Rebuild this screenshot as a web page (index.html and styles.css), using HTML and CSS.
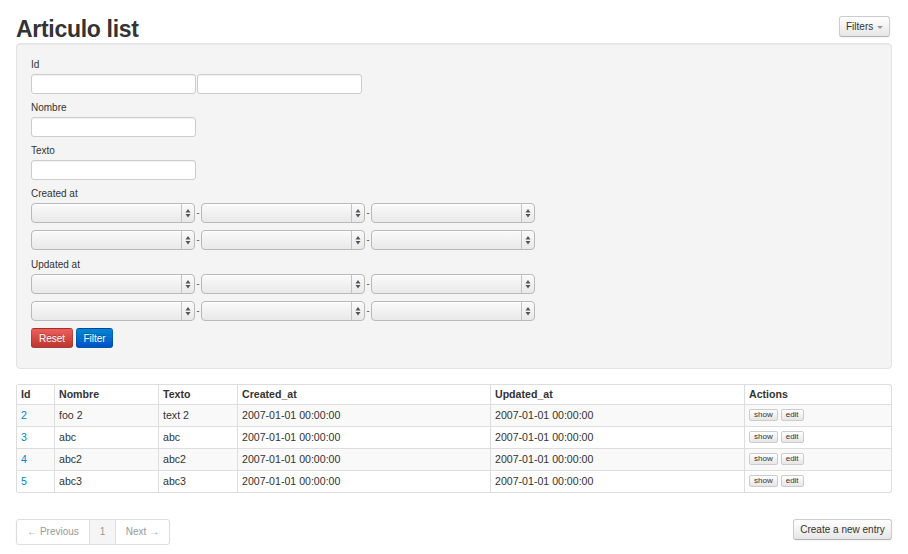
FILE: index.html
```html
<!DOCTYPE html>
<html lang="es">
<head>
  <meta charset="UTF-8" />
  <title>Articulo list</title>
  <link rel="stylesheet" href="styles.css">
</head>
<body>
  <div class="page">
    <div class="page-header">
      <h1>Articulo list</h1>
      <button class="btn btn-filters">Filters <span class="caret"></span></button>
    </div>

    <form class="well">
      <label>Id</label>
      <div class="row">
        <input type="text" class="field">
        <input type="text" class="field">
      </div>

      <label>Nombre</label>
      <div class="row"><input type="text" class="field"></div>

      <label>Texto</label>
      <div class="row"><input type="text" class="field"></div>

      <label>Created at</label>
      <div class="row date-row">
        <span class="select"></span><span class="dash">-</span><span class="select"></span><span class="dash">-</span><span class="select"></span>
      </div>
      <div class="row date-row">
        <span class="select"></span><span class="dash">-</span><span class="select"></span><span class="dash">-</span><span class="select"></span>
      </div>

      <label>Updated at</label>
      <div class="row date-row">
        <span class="select"></span><span class="dash">-</span><span class="select"></span><span class="dash">-</span><span class="select"></span>
      </div>
      <div class="row date-row">
        <span class="select"></span><span class="dash">-</span><span class="select"></span><span class="dash">-</span><span class="select"></span>
      </div>

      <div class="actions">
        <button type="button" class="btn-color btn-danger">Reset</button>
        <button type="button" class="btn-color btn-primary">Filter</button>
      </div>
    </form>

    <table class="list">
      <colgroup>
        <col style="width:38px">
        <col style="width:104px">
        <col style="width:79px">
        <col style="width:253px">
        <col style="width:254px">
        <col>
      </colgroup>
      <thead>
        <tr><th>Id</th><th>Nombre</th><th>Texto</th><th>Created_at</th><th>Updated_at</th><th>Actions</th></tr>
      </thead>
      <tbody>
        <tr>
          <td><a href="#">2</a></td><td>foo 2</td><td>text 2</td>
          <td>2007-01-01 00:00:00</td><td>2007-01-01 00:00:00</td>
          <td><span class="mini">show</span><span class="mini">edit</span></td>
        </tr>
        <tr>
          <td><a href="#">3</a></td><td>abc</td><td>abc</td>
          <td>2007-01-01 00:00:00</td><td>2007-01-01 00:00:00</td>
          <td><span class="mini">show</span><span class="mini">edit</span></td>
        </tr>
        <tr>
          <td><a href="#">4</a></td><td>abc2</td><td>abc2</td>
          <td>2007-01-01 00:00:00</td><td>2007-01-01 00:00:00</td>
          <td><span class="mini">show</span><span class="mini">edit</span></td>
        </tr>
        <tr>
          <td><a href="#">5</a></td><td>abc3</td><td>abc3</td>
          <td>2007-01-01 00:00:00</td><td>2007-01-01 00:00:00</td>
          <td><span class="mini">show</span><span class="mini">edit</span></td>
        </tr>
      </tbody>
    </table>

    <div class="footer">
      <ul class="pager">
        <li class="prev">&larr; Previous</li>
        <li class="current">1</li>
        <li class="next">Next &rarr;</li>
      </ul>
      <button class="btn btn-new">Create a new entry</button>
    </div>
  </div>
</body>
</html>
```

FILE: styles.css
```css
body {
  margin: 0;
  font-family: "Liberation Sans", Arial, sans-serif;
  font-size: 10px;
  color: #333;
  background: #fff;
}

.page {
  padding: 16px 16px 0;
}

.page-header {
  display: flex;
  justify-content: space-between;
  align-items: flex-start;
  height: 27px;
}

h1 {
  margin: 0;
  font-size: 23px;
  line-height: 27px;
  font-weight: bold;
  color: #333;
  letter-spacing: -0.3px;
}

.btn {
  font-family: inherit;
  font-size: 10px;
  color: #333;
  background: linear-gradient(#fff, #e6e6e6);
  border: 1px solid #ccc;
  border-bottom-color: #b3b3b3;
  border-radius: 3px;
  box-shadow: inset 0 1px 0 rgba(255,255,255,.2), 0 1px 2px rgba(0,0,0,.05);
  padding: 0 8px;
  height: 21px;
}

.btn-filters {
  width: 51px;
  margin-right: 2px;
  padding: 0 4px;
}

.caret {
  display: inline-block;
  width: 0;
  height: 0;
  border-left: 3px solid transparent;
  border-right: 3px solid transparent;
  border-top: 3px solid #999;
  vertical-align: middle;
  margin-left: 1px;
}

.well {
  background: #f4f4f4;
  border: 1px solid #e3e3e3;
  border-radius: 4px;
  box-shadow: inset 0 1px 1px rgba(0,0,0,.05);
  padding: 13px 14px 19px;
  height: 292px;
}

.well label {
  display: block;
  line-height: 16px;
  margin-bottom: 1px;
}

.row {
  display: flex;
  align-items: center;
  margin-bottom: 6px;
}

.field {
  box-sizing: border-box;
  width: 165px;
  height: 20px;
  margin: 0 1px 0 0;
  background: #fff;
  border: 1px solid #ccc;
  border-radius: 3px;
  box-shadow: inset 0 1px 1px rgba(0,0,0,.06);
}

.date-row {
  margin-bottom: 7px;
}

.select {
  position: relative;
  box-sizing: border-box;
  width: 164px;
  height: 20px;
  border: 1px solid #b9b9b9;
  border-radius: 4px;
  background: linear-gradient(#fafafa, #e9e9e9);
  box-shadow: inset 0 1px 0 #fff;
}

/* arrow box on the right of each select */
.select::after {
  content: "";
  position: absolute;
  top: 0;
  right: 0;
  bottom: 0;
  width: 12px;
  border-left: 1px solid #c4c4c4;
  background: url("data:image/svg+xml;utf8,<svg xmlns='http://www.w3.org/2000/svg' width='12' height='18'><path d='M6 5 L3.5 8.5 L8.5 8.5 Z M6 13.5 L3.5 10 L8.5 10 Z' fill='%23555'/></svg>") center no-repeat;
}

.dash {
  width: 6px;
  text-align: center;
  font-size: 9px;
  line-height: 20px;
  color: #333;
}

.actions {
  display: flex;
  gap: 3px;
}

.btn-color {
  font-family: inherit;
  font-size: 10px;
  color: #fff;
  text-shadow: 0 -1px 0 rgba(0,0,0,.25);
  height: 20px;
  border-radius: 3px;
  padding: 0 4px;
  border: 1px solid rgba(0,0,0,.15);
  border-bottom-color: rgba(0,0,0,.3);
}

.btn-danger {
  width: 42px;
  background: linear-gradient(#ee5f5b, #bd362f);
}

.btn-primary {
  width: 37px;
  background: linear-gradient(#0088cc, #0050cc);
}

.list {
  width: 100%;
  margin-top: 15px;
  border-collapse: separate;
  border-spacing: 0;
  table-layout: fixed;
  border: 1px solid #ddd;
  border-left: 0;
  border-radius: 3px;
  font-size: 10.6px;
}

.list th,
.list td {
  text-align: left;
  line-height: 14px;
  border-left: 1px solid #ddd;
  white-space: nowrap;
}

.list th {
  font-weight: bold;
  padding: 2px 4px 3px;
}

.list td {
  border-top: 1px solid #ddd;
  padding: 3px 4px 4px;
}

.list tbody tr:nth-child(odd) td {
  background: #f9f9f9;
}

.list a {
  color: #0088cc;
  text-decoration: none;
}

.mini {
  display: inline-block;
  box-sizing: border-box;
  height: 12px;
  font-size: 8px;
  line-height: 10px;
  padding: 0 4px;
  margin: 1px 3px 0 0;
  border: 1px solid #ccc;
  border-radius: 2px;
  background: linear-gradient(#fff, #e6e6e6);
  color: #333;
  vertical-align: top;
}

.footer {
  display: flex;
  justify-content: space-between;
  align-items: flex-start;
  margin-top: 26px;
}

.pager {
  display: flex;
  margin: 0;
  padding: 0;
  list-style: none;
  border: 1px solid #ddd;
  border-radius: 3px;
  box-shadow: 0 1px 2px rgba(0,0,0,.05);
}

.pager li {
  box-sizing: border-box;
  line-height: 24px;
  text-align: center;
  white-space: nowrap;
  color: #999;
  border-left: 1px solid #ddd;
}

.pager li:first-child {
  border-left: 0;
}

.pager .prev {
  width: 72px;
}

.pager .current {
  background: #f5f5f5;
  width: 26px;
}

.pager .next {
  width: 54px;
}

.btn-new {
  width: 99px;
  padding: 0 4px;
}
```
